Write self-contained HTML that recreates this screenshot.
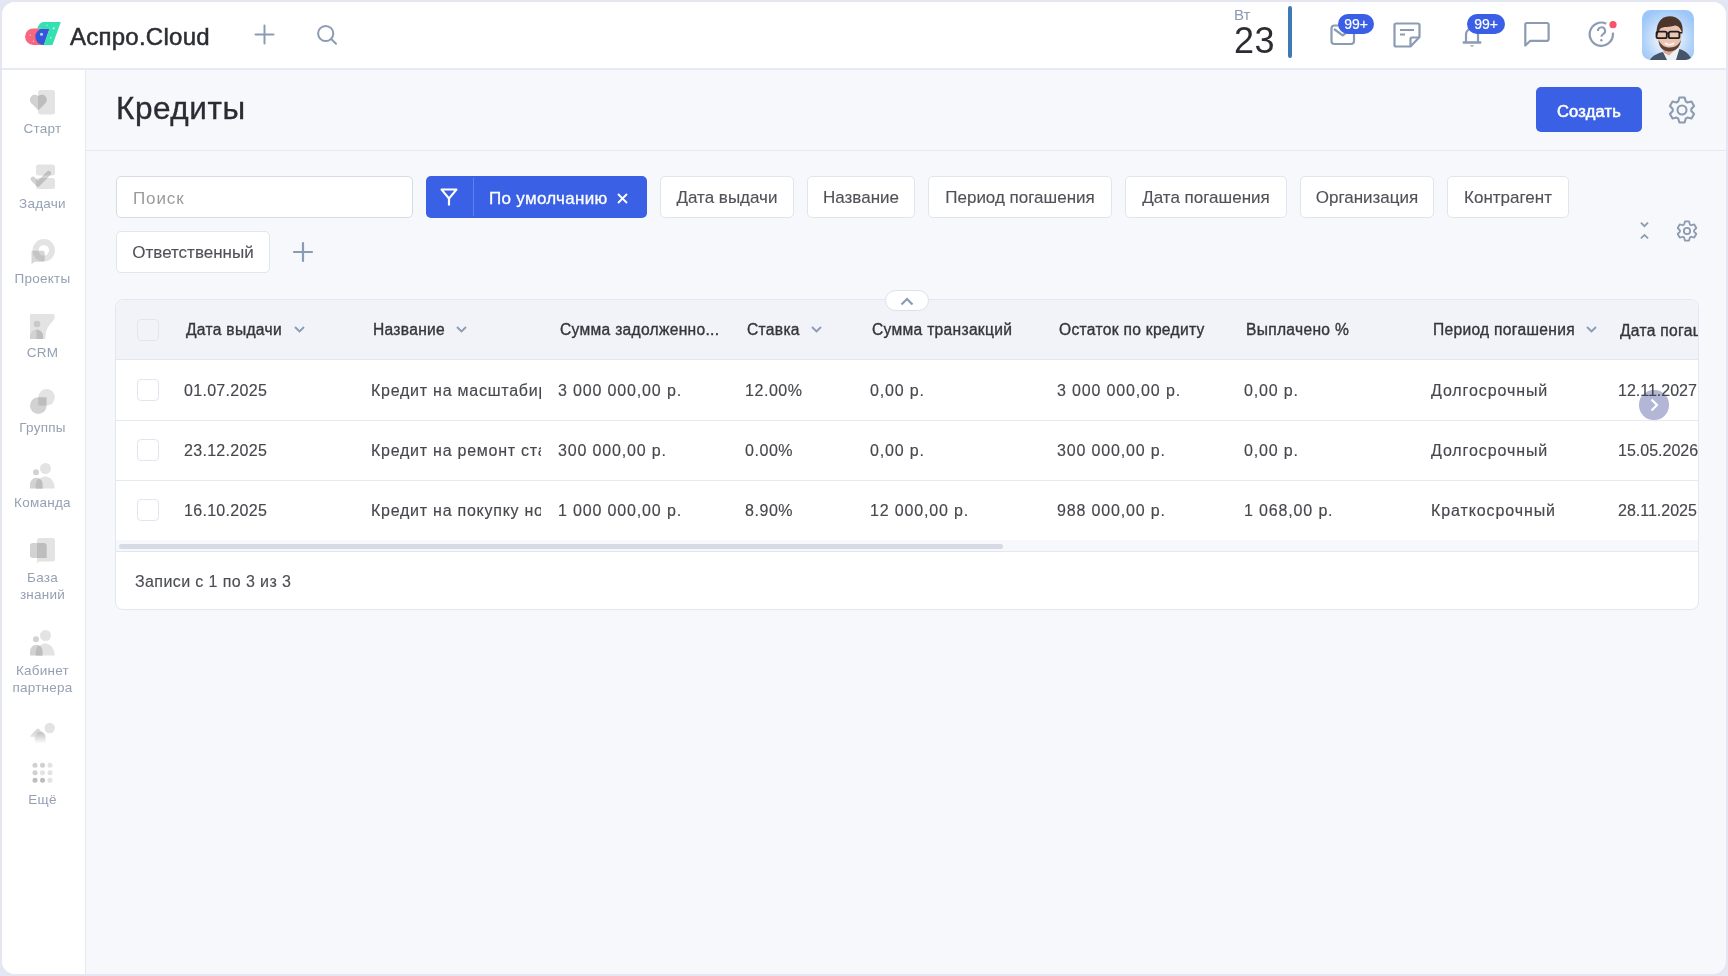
<!DOCTYPE html>
<html lang="ru">
<head>
<meta charset="utf-8">
<title>Кредиты</title>
<style>
*{box-sizing:border-box;margin:0;padding:0}
html,body{width:1728px;height:976px;overflow:hidden}
body{will-change:transform}
body{background:#e4e7f1;font-family:"Liberation Sans",sans-serif;position:relative;color:#2e3036}
.frame{position:absolute;left:2px;top:2px;width:1724px;height:972px;border-radius:13px;overflow:hidden;background:#f7f8fc}
.hdr{position:absolute;left:0;top:0;width:1724px;height:68px;background:#fff;border-bottom:2px solid #e7eaf2}
.side{position:absolute;left:0;top:68px;width:84px;height:904px;background:#fff;border-right:1px solid #e6e9f1}
.tline{position:absolute;left:84px;top:148px;width:1640px;height:1px;background:#e6e9f1}
.t{position:absolute;white-space:nowrap;line-height:1}
svg{position:absolute;overflow:visible}
.chip{position:absolute;top:176px;height:42px;background:#fff;border:1px solid #e1e5ee;border-radius:5px}
.chip span{position:absolute;left:0;right:0;top:12px;text-align:center;font-size:17px;color:#505258;line-height:1;white-space:nowrap;-webkit-text-stroke:0.12px #505258}
.nav{position:absolute;left:2px;width:81px;text-align:center;color:#95a1b3;font-size:13.5px;line-height:17.2px;letter-spacing:0.25px}
.th{position:absolute;top:322px;white-space:nowrap;line-height:1;font-size:15.6px;color:#34363c;-webkit-text-stroke:0.35px #34363c;letter-spacing:0.3px}
.td{position:absolute;white-space:nowrap;line-height:1;font-size:16px;color:#46484e;letter-spacing:0.3px;-webkit-text-stroke:0.15px #46484e}
</style>
</head>
<body>
<div class="frame">
  <div class="hdr"></div>
  <div class="side"></div>
  <div class="tline"></div>
</div>

<!-- HEADER -->
<svg style="left:0;top:0" width="70" height="50" viewBox="0 0 70 50">
  <path d="M33.3 28.45H44V44.95H33.3A8.25 8.25 0 0 1 33.3 28.45Z" fill="#f8677f"/>
  <path d="M43.5 28.6H49.6L43.9 45H43.5A8.2 8.2 0 0 1 43.5 28.6Z" fill="#3456d9"/>
  <path d="M44 22H60.8L52.5 45H43.8L49.6 28.75H37.2C38.6 24.6 41 22 44 22Z" fill="#35e1b0"/>
  <circle cx="41.5" cy="34.3" r="1.5" fill="#c9d2ff"/>
  <circle cx="53.7" cy="28.3" r="1.1" fill="#bff5e3"/>
  <circle cx="50.8" cy="37.8" r="0.8" fill="#bff5e3"/>
  <circle cx="47" cy="25.2" r="0.6" fill="#bff5e3"/>
  <circle cx="30.2" cy="35.2" r="0.7" fill="#ffc7d1"/>
  <circle cx="33.5" cy="41.2" r="0.7" fill="#ffc7d1"/>
</svg>
<div class="t" style="left:70px;top:25px;font-size:24px;color:#2b2d33;letter-spacing:0.25px;-webkit-text-stroke:0.5px #2b2d33">Аспро.Cloud</div>
<svg style="left:254px;top:24px" width="21" height="21" viewBox="0 0 21 21"><path d="M10.5 1.5V19.5M1.5 10.5H19.5" stroke="#8a9bb3" stroke-width="2" stroke-linecap="round"/></svg>
<svg style="left:316px;top:24px" width="22" height="22" viewBox="0 0 22 22"><circle cx="9.7" cy="9.5" r="7.6" stroke="#8a9bb3" stroke-width="2" fill="none"/><path d="M15.2 15L20 19.8" stroke="#8a9bb3" stroke-width="2" stroke-linecap="round"/></svg>

<div class="t" style="left:1234px;top:7px;font-size:15px;color:#8a9bb3">Вт</div>
<div class="t" style="left:1234px;top:23px;font-size:36px;color:#2b2d33;letter-spacing:0.5px">23</div>
<div style="position:absolute;left:1288px;top:6px;width:4px;height:52px;border-radius:2px;background:#3d7bb6"></div>

<!-- mail -->
<svg style="left:1330px;top:24px" width="26" height="22" viewBox="0 0 26 22"><rect x="1.5" y="1.5" width="22.5" height="18.5" rx="3" stroke="#8a9bb3" stroke-width="2.2" fill="none"/><path d="M4 5l8.7 6.5L21.5 5" stroke="#8a9bb3" stroke-width="2.2" fill="none"/></svg>
<div class="t" style="left:1338px;top:14px;width:36px;height:20px;border-radius:10px;background:#3a5fe6;color:#fff;font-size:14px;line-height:20px;text-align:center;-webkit-text-stroke:0.2px #fff">99+</div>
<!-- notes -->
<svg style="left:1393px;top:22px" width="28" height="26" viewBox="0 0 28 26"><path d="M3 1.5H25a1.5 1.5 0 0 1 1.5 1.5V15L17.5 24.5H3A1.5 1.5 0 0 1 1.5 23V3A1.5 1.5 0 0 1 3 1.5Z" stroke="#8a9bb3" stroke-width="2.2" fill="none" stroke-linejoin="round"/><path d="M17.5 24V17A1.5 1.5 0 0 1 19 15.5H26" stroke="#8a9bb3" stroke-width="2.2" fill="none"/><path d="M7 8H21M7 12.5H12" stroke="#8a9bb3" stroke-width="2.2"/></svg>
<!-- bell -->
<svg style="left:1462px;top:23px" width="20" height="25" viewBox="0 0 20 25"><path d="M4 19.5V11.5a6 6 0 0 1 12 0V19.5" stroke="#8a9bb3" stroke-width="2.2" fill="none"/><path d="M1.8 19.5H18.2" stroke="#8a9bb3" stroke-width="2.4" stroke-linecap="round"/><path d="M7.8 22.2h4.4l-2.2 1.8z" fill="#8a9bb3"/></svg>
<div class="t" style="left:1467px;top:14px;width:38px;height:20px;border-radius:10px;background:#3a5fe6;color:#fff;font-size:14px;line-height:20px;text-align:center;-webkit-text-stroke:0.2px #fff">99+</div>
<!-- chat -->
<svg style="left:1524px;top:21px" width="26" height="26" viewBox="0 0 26 26"><path d="M1.3 24.5V3.5A1.5 1.5 0 0 1 2.8 2H23.1A1.5 1.5 0 0 1 24.6 3.5V18.3A1.5 1.5 0 0 1 23.1 19.8H6.3Z" stroke="#8a9bb3" stroke-width="2.2" fill="none" stroke-linejoin="round"/></svg>
<!-- help -->
<svg style="left:1590px;top:22px" width="27" height="27" viewBox="0 0 27 27"><path d="M22.84 10.58A11.65 11.65 0 1 1 16.3 1.68" stroke="#8a9bb3" stroke-width="2.2" fill="none"/><path d="M7.9 8.9A3.6 3.6 0 1 1 13.2 12.1C12 12.7 11.4 13.3 11.4 14.8" stroke="#8a9bb3" stroke-width="2" fill="none"/><circle cx="11.35" cy="18.2" r="1.2" fill="#8a9bb3"/><circle cx="23" cy="2.7" r="3.6" fill="#f6556d"/></svg>
<!-- avatar -->
<div style="position:absolute;left:1642px;top:10px;width:52px;height:50px;border-radius:8.5px;overflow:hidden;background:radial-gradient(ellipse 60% 62% at 50% 58%,#f3f8ff 0,#dcebfc 40%,#b5d5f9 72%,#9cc7f7 100%)">
  <svg style="left:0;top:0" width="52" height="50" viewBox="0 0 52 50">
    <path d="M8 50C10 46 15 43.5 21 42L27 46L36 38.5C42 40 47 43 50 50Z" fill="#46546a"/>
    <path d="M21 42L25 50H34L37.5 38.5L33 37Z" fill="#edf1f4"/>
    <path d="M21.5 34V42.5L27 45.5L34.5 38.5V33Z" fill="#d9a993"/>
    <path d="M15.5 26C15 16 20 10.5 27 10.5C34 10.5 39.5 15 39.5 25C39.5 35 34 41 27.5 41C21 41 16 35 15.5 26Z" fill="#ecc4b2"/>
    <path d="M15 27C13 15 18 6.2 27.5 6.2C37 6.2 42 13 40.5 24C39 19 37 16 33 15.5C28 17.5 21 16 18 19C16.5 21 15.8 24 15 27Z" fill="#4d3529"/>
    <path d="M16.5 30C17 38 21.5 41.5 27.5 41.5C33 41.5 38 38 39 30C37 34.5 33.5 37.5 28 37.5C22.5 37.5 19 35 16.5 30Z" fill="#5e4334"/>
    <path d="M23 33C25.5 35.3 29.5 35.3 32 33" stroke="#f7f7f7" stroke-width="1.7" fill="none"/>
    <rect x="14.5" y="21.6" width="10.3" height="6.6" rx="1.8" stroke="#1f1f1f" stroke-width="1.8" fill="none"/>
    <rect x="26.8" y="21.6" width="10.6" height="6.6" rx="1.8" stroke="#1f1f1f" stroke-width="1.8" fill="none"/>
    <path d="M24.8 23.5H26.8M37.4 22.8H40" stroke="#1f1f1f" stroke-width="1.5"/>
  </svg>
</div>


<!-- SIDEBAR -->
<svg style="left:30px;top:90px" width="25" height="25" viewBox="0 0 25 25">
  <rect x="8" y="0" width="17" height="24.5" rx="2.5" fill="#e3e3e3"/>
  <path d="M8.3 20.2L1.3 13.2A4.95 4.95 0 0 1 8.3 6.2A4.95 4.95 0 0 1 15.3 13.2Z" fill="#d2d2d2"/>
  <path d="M8.3 20.2L8 19.9V6.5L8.3 6.2A4.95 4.95 0 0 1 15.3 13.2Z" fill="#bdbdbd"/>
</svg>
<div class="nav" style="top:119.5px">Старт</div>

<svg style="left:30px;top:164px" width="25" height="26" viewBox="0 0 25 26">
  <defs><clipPath id="taskclip"><rect x="6" y="0.5" width="19" height="11" rx="2.5"/><rect x="6" y="14" width="19" height="11" rx="2.5"/></clipPath></defs>
  <rect x="6" y="0.5" width="19" height="11" rx="2.5" fill="#e3e3e3"/>
  <rect x="6" y="14" width="19" height="11" rx="2.5" fill="#e3e3e3"/>
  <path d="M3 15L8 20.2L18.6 9.3" stroke="#d2d2d2" stroke-width="4.8" stroke-linecap="round" stroke-linejoin="round" fill="none"/>
  <g clip-path="url(#taskclip)"><path d="M3 15L8 20.2L18.6 9.3" stroke="#bfbfbf" stroke-width="4.8" stroke-linecap="round" stroke-linejoin="round" fill="none"/></g>
</svg>
<div class="nav" style="top:194.5px">Задачи</div>

<svg style="left:30px;top:239px" width="25" height="26" viewBox="0 0 25 26">
  <defs><clipPath id="ringclip"><path d="M13.8 0.1A11.2 11.2 0 1 1 13.8 22.5A11.2 11.2 0 1 1 13.8 0.1ZM13.8 6.1A5.2 5.2 0 1 0 13.8 16.5A5.2 5.2 0 1 0 13.8 6.1Z" clip-rule="evenodd"/></clipPath></defs>
  <path d="M13.8 0.1A11.2 11.2 0 1 1 13.8 22.5A11.2 11.2 0 1 1 13.8 0.1ZM13.8 6.1A5.2 5.2 0 1 0 13.8 16.5A5.2 5.2 0 1 0 13.8 6.1Z" fill="#e3e3e3" fill-rule="evenodd"/>
  <path d="M2 11.8H12.7A2 2 0 0 1 14.7 13.8V20.7A2 2 0 0 1 12.7 22.7H4.5L1.5 25.2V13.8A2 2 0 0 1 2 11.8Z" fill="#d6d6d6"/>
  <g clip-path="url(#ringclip)"><path d="M2 11.8H12.7A2 2 0 0 1 14.7 13.8V20.7A2 2 0 0 1 12.7 22.7H4.5L1.5 25.2V13.8A2 2 0 0 1 2 11.8Z" fill="#c4c4c4"/></g>
</svg>
<div class="nav" style="top:269.5px">Проекты</div>

<svg style="left:30px;top:314px" width="25" height="25" viewBox="0 0 25 25">
  <path d="M0 0H22.5A2.3 2.3 0 0 1 24.8 2.3C24.8 6 21 9 18 13C16 16 15.5 20 15.5 25H2.3A2.3 2.3 0 0 1 0 22.7Z" fill="#e3e3e3"/>
  <circle cx="7" cy="10" r="3.3" fill="#c9c9c9"/>
  <path d="M0 25V22A6.5 6.5 0 0 1 13 22V25Z" fill="#d2d2d2"/>
  <path d="M6.5 15.5A6.5 6.5 0 0 1 13 22V25H6.5Z" fill="#bdbdbd"/>
</svg>
<div class="nav" style="top:344px">CRM</div>

<svg style="left:30px;top:389px" width="25" height="25" viewBox="0 0 25 25">
  <circle cx="16.6" cy="8.3" r="8.3" fill="#e3e3e3"/>
  <circle cx="8.3" cy="16.6" r="8.3" fill="#d2d2d2"/>
  <rect x="8.3" y="8.3" width="8.3" height="8.3" fill="#bdbdbd"/>
</svg>
<div class="nav" style="top:419px">Группы</div>

<svg style="left:30px;top:463px" width="25" height="26" viewBox="0 0 25 26">
  <circle cx="15.5" cy="5.5" r="5.5" fill="#e3e3e3"/>
  <path d="M5.8 25.5A9.5 12 0 0 1 24.8 25.5Z" fill="#e3e3e3"/>
  <circle cx="6" cy="9.3" r="3" fill="#d2d2d2"/>
  <path d="M0 25.5V21.5A6 6.5 0 0 1 12.5 21.5V25.5Z" fill="#d2d2d2"/>
  <path d="M8.5 15.5A4 6 0 0 1 12.5 21.5V25.5H5.8A12 12 0 0 1 8.5 15.5Z" fill="#bdbdbd"/>
</svg>
<div class="nav" style="top:493.5px">Команда</div>

<svg style="left:30px;top:538px" width="25" height="26" viewBox="0 0 25 26">
  <path d="M9.5 0H22.5A2.5 2.5 0 0 1 25 2.5V21A2.5 2.5 0 0 1 22.5 23.5H9L7 25.5V2.5A2.5 2.5 0 0 1 9.5 0Z" fill="#e3e3e3"/>
  <rect x="0" y="5" width="16.6" height="15" rx="2.5" fill="#d2d2d2"/>
  <path d="M7 5H14A2.5 2.5 0 0 1 16.6 7.5V20H7Z" fill="#bdbdbd"/>
</svg>
<div class="nav" style="top:569px">База<br>знаний</div>

<svg style="left:30px;top:630px" width="25" height="26" viewBox="0 0 25 26">
  <circle cx="15.5" cy="5.5" r="5.5" fill="#e3e3e3"/>
  <path d="M5.8 25.5A9.5 12 0 0 1 24.8 25.5Z" fill="#e3e3e3"/>
  <circle cx="6" cy="9.3" r="3" fill="#d2d2d2"/>
  <path d="M0 25.5V21.5A6 6.5 0 0 1 12.5 21.5V25.5Z" fill="#d2d2d2"/>
  <path d="M8.5 15.5A4 6 0 0 1 12.5 21.5V25.5H5.8A12 12 0 0 1 8.5 15.5Z" fill="#bdbdbd"/>
</svg>
<div class="nav" style="top:661.5px">Кабинет<br>партнера</div>

<svg style="left:29px;top:722px;overflow:hidden" width="27" height="25" viewBox="0 0 27 25">
  <defs><linearGradient id="fade" x1="0" y1="0" x2="0" y2="1"><stop offset="0" stop-color="#fff" stop-opacity="0"/><stop offset="0.42" stop-color="#fff" stop-opacity="0"/><stop offset="0.86" stop-color="#fff" stop-opacity="1"/><stop offset="1" stop-color="#fff" stop-opacity="1"/></linearGradient></defs>
  <circle cx="20.7" cy="6" r="5.2" fill="#e3e3e3"/>
  <path d="M1.6 13.4L7.6 7.2A1.8 1.8 0 0 1 10.2 7.2L16.2 13.4A1 1 0 0 1 15.5 15H12.5V25H5.5V15H2.3A1 1 0 0 1 1.6 13.4Z" fill="#d8d8d8"/>
  <path d="M6.5 15A5 5 0 0 1 16.5 15V25H6.5Z" fill="#c2c2c2"/>
  <circle cx="20.7" cy="24" r="4.5" fill="#ececec"/>
  <rect x="-2" y="0" width="31" height="25" fill="url(#fade)"/>
</svg>

<svg style="left:30px;top:760px" width="25" height="25" viewBox="0 0 25 25"><circle cx="5.0" cy="5.2" r="2.5" fill="#d0d0d0"/><circle cx="12.5" cy="5.2" r="2.5" fill="#d0d0d0"/><circle cx="20.0" cy="5.2" r="2.5" fill="#e3e3e3"/><circle cx="5.0" cy="12.8" r="2.5" fill="#d0d0d0"/><circle cx="12.5" cy="12.8" r="2.5" fill="#e3e3e3"/><circle cx="20.0" cy="12.8" r="2.5" fill="#e3e3e3"/><circle cx="5.0" cy="20.2" r="2.5" fill="#bdbdbd"/><circle cx="12.5" cy="20.2" r="2.5" fill="#bdbdbd"/><circle cx="20.0" cy="20.2" r="2.5" fill="#e3e3e3"/></svg>
<div class="nav" style="top:790.5px">Ещё</div>


<!-- CONTENT HEADER -->
<div class="t" style="left:116px;top:92.5px;font-size:31.5px;color:#2a2c33;letter-spacing:0.55px;-webkit-text-stroke:0.35px #2a2c33">Кредиты</div>
<div style="position:absolute;left:1536px;top:87px;width:106px;height:45px;border-radius:5px;background:#3a60e6"></div>
<div class="t" style="left:1536px;top:102.5px;width:106px;text-align:center;font-size:16.5px;color:#fff;-webkit-text-stroke:0.55px #fff;letter-spacing:0.2px">Создать</div>
<svg style="left:1663.7px;top:91.5px" width="36" height="36" viewBox="0 0 36 36"><path d="M14.20 9.51 L15.40 5.55 L20.60 5.55 L21.80 9.51 A9.30 9.30 0 0 1 23.45 10.46 L27.48 9.52 L30.08 14.03 L27.25 17.05 A9.30 9.30 0 0 1 27.25 18.95 L30.08 21.97 L27.48 26.48 L23.45 25.54 A9.30 9.30 0 0 1 21.80 26.49 L20.60 30.45 L15.40 30.45 L14.20 26.49 A9.30 9.30 0 0 1 12.55 25.54 L8.52 26.48 L5.92 21.97 L8.75 18.95 A9.30 9.30 0 0 1 8.75 17.05 L5.92 14.03 L8.52 9.52 L12.55 10.46 A9.30 9.30 0 0 1 14.20 9.51 Z" stroke="#8b9bb0" stroke-width="2.1" fill="none" stroke-linejoin="round"/><circle cx="18" cy="18" r="4.5" stroke="#8b9bb0" stroke-width="2.1" fill="none"/></svg>

<!-- FILTERS -->
<div style="position:absolute;left:116px;top:176px;width:297px;height:42px;background:#fff;border:1px solid #d6dce6;border-radius:5px"></div>
<div class="t" style="left:133px;top:190px;font-size:17px;color:#9a9a9a;letter-spacing:0.9px">Поиск</div>

<div style="position:absolute;left:426px;top:176px;width:221px;height:42px;background:#3a60e6;border-radius:5px"></div>
<div style="position:absolute;left:473px;top:178px;width:1px;height:38px;background:#5f7fec"></div>
<svg style="left:440px;top:188px" width="18" height="18" viewBox="0 0 18 18"><path d="M1.5 1.5H16.5L9 10.5Z" stroke="#fff" stroke-width="2" fill="none" stroke-linejoin="round"/><path d="M9 10V17.5" stroke="#fff" stroke-width="2.2"/></svg>
<div class="t" style="left:489px;top:190px;font-size:17px;color:#fff;-webkit-text-stroke:0.3px #fff;letter-spacing:0.3px">По умолчанию</div>
<svg style="left:617px;top:193px" width="11" height="11" viewBox="0 0 11 11"><path d="M1 1L10 10M10 1L1 10" stroke="#fff" stroke-width="1.8"/></svg>

<div class="chip" style="left:660px;width:134px"><span>Дата выдачи</span></div>
<div class="chip" style="left:807px;width:108px"><span>Название</span></div>
<div class="chip" style="left:928px;width:184px"><span>Период погашения</span></div>
<div class="chip" style="left:1125px;width:162px"><span>Дата погашения</span></div>
<div class="chip" style="left:1300px;width:134px"><span>Организация</span></div>
<div class="chip" style="left:1447px;width:122px"><span>Контрагент</span></div>
<div class="chip" style="left:116px;top:231px;width:154px"><span>Ответственный</span></div>
<svg style="left:293px;top:242px" width="20" height="20" viewBox="0 0 20 20"><path d="M10 1V19M1 10H19" stroke="#8a9bb3" stroke-width="2.2" stroke-linecap="round"/></svg>

<svg style="left:1640px;top:221px" width="9" height="19" viewBox="0 0 9 19"><path d="M0.9 1.7L4.45 5.2L8 1.7M0.9 17.4L4.45 13.9L8 17.4" stroke="#8b9bb0" stroke-width="1.8" fill="none"/></svg>
<svg style="left:1668.9px;top:213px" width="36" height="36" viewBox="0 0 36 36"><path d="M15.10 11.52 L15.95 8.45 L20.05 8.45 L20.90 11.52 A7.10 7.10 0 0 1 22.16 12.25 L25.25 11.45 L27.30 15.00 L25.06 17.27 A7.10 7.10 0 0 1 25.06 18.73 L27.30 21.00 L25.25 24.55 L22.16 23.75 A7.10 7.10 0 0 1 20.90 24.48 L20.05 27.55 L15.95 27.55 L15.10 24.48 A7.10 7.10 0 0 1 13.84 23.75 L10.75 24.55 L8.70 21.00 L10.94 18.73 A7.10 7.10 0 0 1 10.94 17.27 L8.70 15.00 L10.75 11.45 L13.84 12.25 A7.10 7.10 0 0 1 15.10 11.52 Z" stroke="#8b9bb0" stroke-width="1.8" fill="none" stroke-linejoin="round"/><circle cx="18" cy="18" r="3.15" stroke="#8b9bb0" stroke-width="1.8" fill="none"/></svg>

<!-- TABLE -->
<div style="position:absolute;left:115px;top:299px;width:1584px;height:311px;background:#fff;border:1px solid #e3e7ef;border-radius:8px;overflow:hidden">
  <div style="position:absolute;left:0;top:0;width:100%;height:60px;background:#f1f3f8;border-bottom:1px solid #e3e7ef"></div>
  <div style="position:absolute;left:0;top:120px;width:100%;height:1px;background:#e6e9f0"></div>
  <div style="position:absolute;left:0;top:180px;width:100%;height:1px;background:#e6e9f0"></div>
  <div style="position:absolute;left:0;top:240px;width:100%;height:12px;background:#f7f8fb;border-bottom:1px solid #e3e7ef"></div>
  <div style="position:absolute;left:3px;top:243.5px;width:884px;height:5px;border-radius:2.5px;background:#d5dae4"></div>
</div>
<div style="position:absolute;left:885px;top:290px;width:44px;height:21px;border-radius:11px;background:#fff;border:1px solid #dce1e9"></div>
<svg style="left:900px;top:297px" width="14" height="9" viewBox="0 0 14 9"><path d="M1.5 7.5L7 2L12.5 7.5" stroke="#8a9bb3" stroke-width="2.2" fill="none"/></svg>

<div style="position:absolute;left:137px;top:319px;width:22px;height:22px;border:1px solid #e1e5f0;border-radius:4px"></div>
<div style="position:absolute;left:137px;top:379px;width:22px;height:22px;border:1px solid #e1e5f0;border-radius:4px"></div>
<div style="position:absolute;left:137px;top:439px;width:22px;height:22px;border:1px solid #e1e5f0;border-radius:4px"></div>
<div style="position:absolute;left:137px;top:499px;width:22px;height:22px;border:1px solid #e1e5f0;border-radius:4px"></div>
<div style="position:absolute;left:1639.4px;top:390.2px;width:29.7px;height:29.7px;border-radius:50%;background:#b3b6d4"></div>
<div class="th" style="left:186px">Дата выдачи</div>
<svg style="left:294px;top:326px" width="11" height="7" viewBox="0 0 11 7"><path d="M1 1L5.5 5.5L10 1" stroke="#8a9bb3" stroke-width="1.8" fill="none"/></svg>
<div class="th" style="left:373px">Название</div>
<svg style="left:456px;top:326px" width="11" height="7" viewBox="0 0 11 7"><path d="M1 1L5.5 5.5L10 1" stroke="#8a9bb3" stroke-width="1.8" fill="none"/></svg>
<div class="th" style="left:560px">Сумма задолженно...</div>
<div class="th" style="left:747px">Ставка</div>
<svg style="left:811px;top:326px" width="11" height="7" viewBox="0 0 11 7"><path d="M1 1L5.5 5.5L10 1" stroke="#8a9bb3" stroke-width="1.8" fill="none"/></svg>
<div class="th" style="left:872px">Сумма транзакций</div>
<div class="th" style="left:1059px">Остаток по кредиту</div>
<div class="th" style="left:1246px">Выплачено %</div>
<div class="th" style="left:1433px">Период погашения</div>
<svg style="left:1586px;top:326px" width="11" height="7" viewBox="0 0 11 7"><path d="M1 1L5.5 5.5L10 1" stroke="#8a9bb3" stroke-width="1.8" fill="none"/></svg>
<div style="position:absolute;left:1620px;top:310px;width:78px;height:40px;overflow:hidden"><div class="th" style="left:0;top:13px">Дата погашения</div></div>
<div class="td" style="left:184px;top:383px">01.07.2025</div>
<div style="position:absolute;left:371px;top:383px;width:170px;height:20px;overflow:hidden"><div class="td" style="left:0;top:0;letter-spacing:0.75px">Кредит на масштабирование</div></div>
<div class="td" style="left:558px;top:383px;letter-spacing:0.85px">3 000 000,00 р.</div>
<div class="td" style="left:745px;top:383px;letter-spacing:0.55px">12.00%</div>
<div class="td" style="left:870px;top:383px;letter-spacing:0.85px">0,00 р.</div>
<div class="td" style="left:1057px;top:383px;letter-spacing:0.85px">3 000 000,00 р.</div>
<div class="td" style="left:1244px;top:383px;letter-spacing:0.85px">0,00 р.</div>
<div class="td" style="left:1431px;top:383px;letter-spacing:0.9px">Долгосрочный</div>
<div style="position:absolute;left:1618px;top:383px;width:80px;height:20px;overflow:hidden"><div class="td" style="left:0;top:0;letter-spacing:0">12.11.2027</div></div>
<div class="td" style="left:184px;top:443px">23.12.2025</div>
<div style="position:absolute;left:371px;top:443px;width:170px;height:20px;overflow:hidden"><div class="td" style="left:0;top:0;letter-spacing:0.75px">Кредит на ремонт станков</div></div>
<div class="td" style="left:558px;top:443px;letter-spacing:0.85px">300 000,00 р.</div>
<div class="td" style="left:745px;top:443px;letter-spacing:0.55px">0.00%</div>
<div class="td" style="left:870px;top:443px;letter-spacing:0.85px">0,00 р.</div>
<div class="td" style="left:1057px;top:443px;letter-spacing:0.85px">300 000,00 р.</div>
<div class="td" style="left:1244px;top:443px;letter-spacing:0.85px">0,00 р.</div>
<div class="td" style="left:1431px;top:443px;letter-spacing:0.9px">Долгосрочный</div>
<div style="position:absolute;left:1618px;top:443px;width:80px;height:20px;overflow:hidden"><div class="td" style="left:0;top:0;letter-spacing:0">15.05.2026</div></div>
<div class="td" style="left:184px;top:503px">16.10.2025</div>
<div style="position:absolute;left:371px;top:503px;width:170px;height:20px;overflow:hidden"><div class="td" style="left:0;top:0;letter-spacing:0.75px">Кредит на покупку нового</div></div>
<div class="td" style="left:558px;top:503px;letter-spacing:0.85px">1 000 000,00 р.</div>
<div class="td" style="left:745px;top:503px;letter-spacing:0.55px">8.90%</div>
<div class="td" style="left:870px;top:503px;letter-spacing:0.85px">12 000,00 р.</div>
<div class="td" style="left:1057px;top:503px;letter-spacing:0.85px">988 000,00 р.</div>
<div class="td" style="left:1244px;top:503px;letter-spacing:0.85px">1 068,00 р.</div>
<div class="td" style="left:1431px;top:503px;letter-spacing:0.9px">Краткосрочный</div>
<div style="position:absolute;left:1618px;top:503px;width:80px;height:20px;overflow:hidden"><div class="td" style="left:0;top:0;letter-spacing:0">28.11.2025</div></div>

<svg style="left:1649px;top:398px" width="11" height="14" viewBox="0 0 11 14"><path d="M2.5 1.5L8 7L2.5 12.5" stroke="#fff" stroke-width="2.2" fill="none"/></svg>
<div class="t" style="left:135px;top:574px;font-size:16px;color:#4c4e54;letter-spacing:0.4px;-webkit-text-stroke:0.15px #4c4e54">Записи с 1 по 3 из 3</div>

</body>
</html>
